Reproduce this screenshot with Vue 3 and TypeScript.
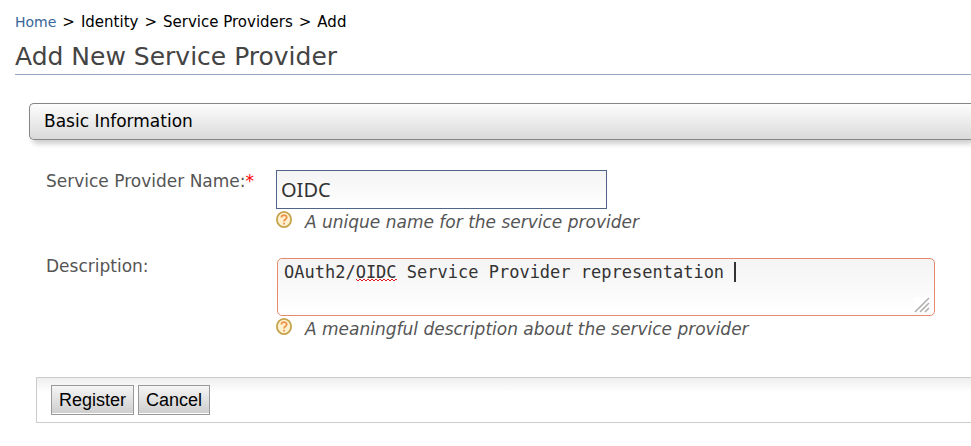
<script setup lang="ts">
import { ref } from 'vue'

const trail: string[] = ['Identity', 'Service Providers', 'Add']
const providerName = ref('OIDC')
const description = ref('OAuth2/OIDC Service Provider representation ')
</script>

<template>
  <main class="page">
    <nav class="breadcrumb" aria-label="Breadcrumb">
      <a href="#">Home</a>
      <template v-for="item in trail" :key="item">
        <span>&gt;</span>
        <span>{{ item }}</span>
      </template>
    </nav>
    <h1>Add New Service Provider</h1>

    <form class="form" @submit.prevent>
      <h2>Basic Information</h2>

      <div class="fields">
        <label for="sp-name">Service Provider Name:<span class="required">*</span></label>
        <div class="field">
          <input id="sp-name" v-model="providerName" type="text" />
          <p class="help">
            <svg viewBox="0 0 16 17" aria-hidden="true">
              <ellipse cx="8" cy="8.5" rx="7.1" ry="7.6" fill="#fdf1cf" stroke="#c6a24c" stroke-width="1.8" />
              <path d="M5.4 6.6C5.4 3.4 10.7 3.4 10.7 6.5C10.7 8.4 8.1 8.3 8.1 10.4M8.1 11.7V13.4" fill="none" stroke="#f0934a" stroke-width="1.8" />
            </svg>
            A unique name for the service provider
          </p>
        </div>

        <label for="sp-description">Description:</label>
        <div class="field">
          <div class="editor">
            <textarea id="sp-description" v-model="description" rows="2" spellcheck="false"></textarea>
            <svg class="squiggle" aria-hidden="true">
              <defs>
                <pattern id="wave" width="4" height="4" patternUnits="userSpaceOnUse">
                  <path d="M-1 0L0 1L2 3L4 1L5 0" fill="none" stroke="#e01b1b" stroke-width="1" />
                </pattern>
              </defs>
              <rect width="100%" height="4" fill="url(#wave)" />
            </svg>
            <span class="caret"></span>
            <svg class="grip" viewBox="0 0 16 16" aria-hidden="true">
              <rect width="16" height="16" fill="#fff" />
              <path d="M1 15L15 1M6 15L15 6M11 15L15 11" stroke="#b0b0ae" stroke-width="1.6" />
            </svg>
          </div>
          <p class="help">
            <svg viewBox="0 0 16 17" aria-hidden="true">
              <ellipse cx="8" cy="8.5" rx="7.1" ry="7.6" fill="#fdf1cf" stroke="#c6a24c" stroke-width="1.8" />
              <path d="M5.4 6.6C5.4 3.4 10.7 3.4 10.7 6.5C10.7 8.4 8.1 8.3 8.1 10.4M8.1 11.7V13.4" fill="none" stroke="#f0934a" stroke-width="1.8" />
            </svg>
            A meaningful description about the service provider
          </p>
        </div>
      </div>

      <div class="actions">
        <button type="submit">Register</button>
        <button type="button">Cancel</button>
      </div>
    </form>
  </main>
</template>

<style>
body {
  margin: 0;
  background: #fff;
}
</style>

<style scoped>
.page {
  padding: 12px 0 0 15px;
  overflow: hidden;
  color: #555;
  font-family: "DejaVu Sans", sans-serif;
  font-size: 17px;
  line-height: 20px;
}

.breadcrumb {
  display: flex;
  gap: 6px;
  color: #000;
  font-size: 15px;
}

.breadcrumb a {
  color: #386698;
  font-size: 14px;
  text-decoration: none;
}

h1 {
  margin: 8px 0 28px;
  border-bottom: 1px solid #94a9c5;
  color: #444;
  font-size: 25px;
  font-weight: 400;
  line-height: 34px;
}

.form {
  padding-left: 14px;
}

h2 {
  margin: 0;
  padding: 7px 14px;
  border: 1px solid #868686;
  border-right: 0;
  border-radius: 5px 0 0 5px;
  background: linear-gradient(#fdfdfd, #dadada);
  box-shadow: 3px 4px 5px #d0d0d0;
  color: #000;
  font-size: 17px;
  font-weight: 400;
  line-height: 21px;
}

.fields {
  display: grid;
  grid-template-columns: 230px 1fr;
  padding: 30px 36px 0 17px;
}

label {
  padding-top: 1px;
}

.required {
  color: #f00;
}

input,
textarea {
  display: block;
  box-sizing: border-box;
  outline: 0;
  background: linear-gradient(#f4f4f4, #fff);
  color: #333;
}

input {
  width: 331px;
  max-width: 100%;
  height: 39px;
  margin: 0;
  padding: 0 4px;
  border: 1px solid #4f6487;
  font: 20px "Noto Sans", sans-serif;
}

.help {
  display: flex;
  align-items: center;
  gap: 13px;
  margin: 2px 0 23px;
  font-style: italic;
}

.help svg {
  flex: none;
  width: 16px;
  height: 17px;
  margin-bottom: 4px;
}

.editor {
  position: relative;
  margin: 3px 0 0 1px;
  font: 17px/20px "DejaVu Sans Mono", monospace;
}

textarea {
  width: 100%;
  height: 58px;
  margin: 0;
  padding: 3px 6px;
  border: 1px solid #e5896c;
  border-radius: 5px;
  font: inherit;
  resize: none;
}

.squiggle {
  position: absolute;
  top: 20px;
  left: calc(7px + 7ch);
  width: 4ch;
  height: 4px;
}

.caret {
  position: absolute;
  top: 4px;
  left: calc(7px + 44ch);
  width: 2px;
  height: 20px;
  background: #333;
}

.grip {
  position: absolute;
  right: 5px;
  bottom: 3px;
  width: 16px;
  height: 16px;
}

.actions {
  display: flex;
  gap: 4px;
  margin: 15px 0 0 7px;
  padding: 7px 14px;
  border: 1px solid #ccc;
  border-right: 0;
  background: linear-gradient(#eee, #fff 14px);
}

button {
  padding: 3px 7px;
  border: 1px solid #999;
  border-radius: 0;
  background: linear-gradient(#f5f5f5, #cdcdcd);
  box-shadow: inset 0 -1px #fff;
  color: #000;
  font: 18px/22px "Liberation Sans", sans-serif;
}
</style>
